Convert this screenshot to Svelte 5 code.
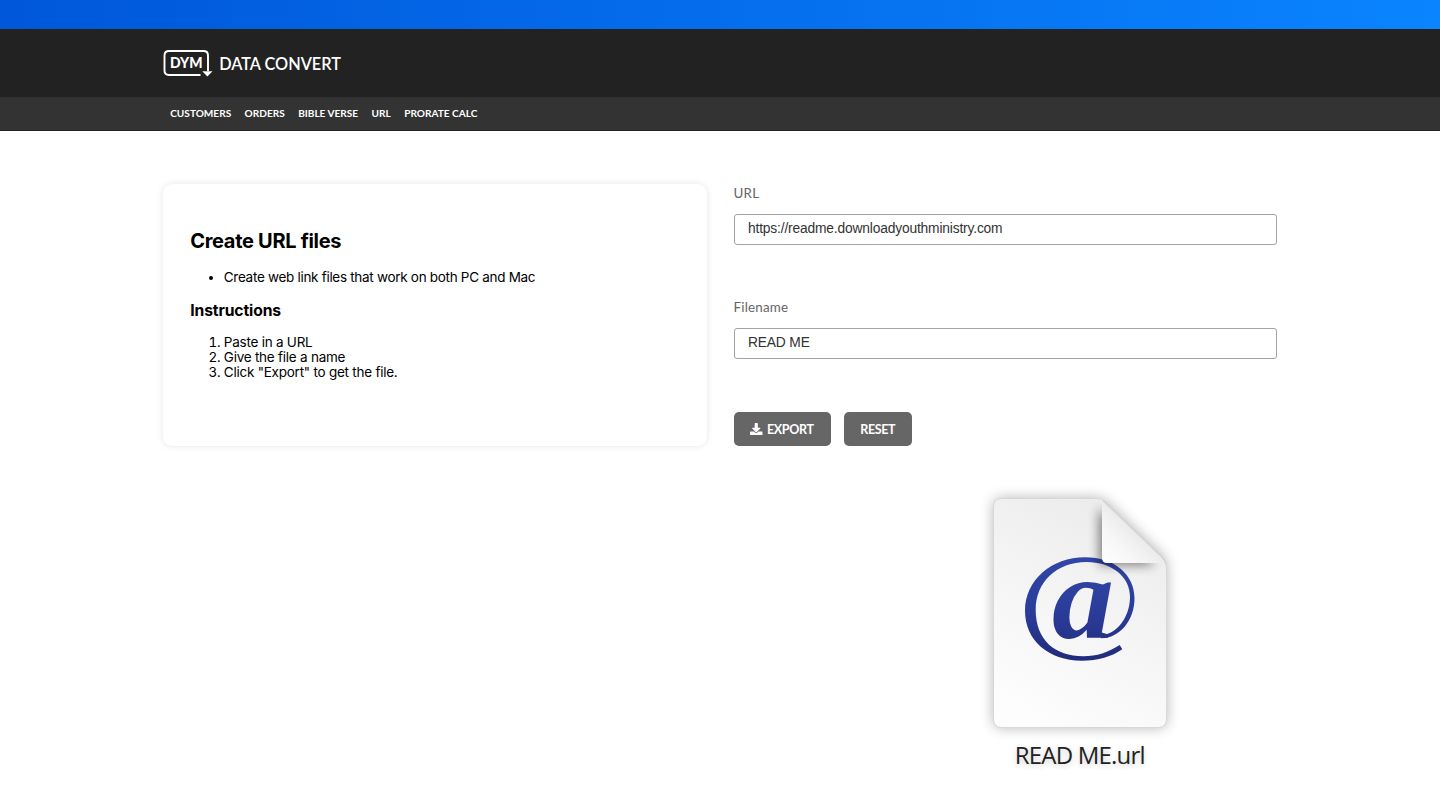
<script>
  let url = $state('https://readme.downloadyouthministry.com');
  let filename = $state('READ ME');
  const links = ['CUSTOMERS', 'ORDERS', 'BIBLE VERSE', 'URL', 'PRORATE CALC'];
</script>

<div class="strip"></div>
<header>
  <div class="wrap brand">
    <svg class="logo" width="50" height="30" viewBox="0 0 50 30">
      <path d="M45 23V7.500Q45 3 40.500 3H6Q1.500 3 1.500 7.500V22.500Q1.500 27 6 27H37.500" fill="none" stroke="#fff" stroke-width="1.9" />
      <path d="M39.300 23.200H49.500L44.400 28.600Z" fill="#fff" />
      <text x="7" y="20.300" textLength="32.500" lengthAdjust="spacingAndGlyphs">DYM</text>
    </svg>
    <span class="title">DATA CONVERT</span>
  </div>
</header>
<nav>
  <div class="wrap links">
    {#each links as link}<a href="#top">{link}</a>{/each}
  </div>
</nav>

<main class="wrap">
  <section class="card">
    <h2>Create URL files</h2>
    <ul><li>Create web link files that work on both PC and Mac</li></ul>
    <h3>Instructions</h3>
    <ol>
      <li>Paste in a URL</li>
      <li>Give the file a name</li>
      <li>Click "Export" to get the file.</li>
    </ol>
  </section>

  <section class="form">
    <label for="url">URL</label>
    <input id="url" bind:value={url} />
    <label for="filename">Filename</label>
    <input id="filename" bind:value={filename} />
    <div class="buttons">
      <button class="export">
        <svg width="12.500" height="12.500" viewBox="0 0 512 512" fill="#fff"><path d="M216 0h80c13 0 24 11 24 24v168h88c18 0 27 21 14 34L270 378c-8 8-20 8-28 0L90 226c-13-13-4-34 14-34h88V24c0-13 11-24 24-24zm296 376v112c0 13-11 24-24 24H24c-13 0-24-11-24-24V376c0-13 11-24 24-24h147l49 49c20 20 52 20 72 0l49-49h147c13 0 24 11 24 24z" /></svg>
        <span>EXPORT</span>
      </button>
      <button class="reset"><span>RESET</span></button>
    </div>
  </section>
</main>

<div class="wrap preview">
  <figure>
    <svg class="file" width="220" height="260" viewBox="970 480 220 260">
      <defs>
        <linearGradient id="paper" x1="0.7" y1="0" x2="0.3" y2="1">
          <stop offset="0" stop-color="#ebebeb" />
          <stop offset="0.4" stop-color="#f3f3f3" />
          <stop offset="1" stop-color="#fdfdfd" />
        </linearGradient>
        <linearGradient id="fold" x1="0.55" y1="0.45" x2="0" y2="1">
          <stop offset="0" stop-color="#e9e9e9" />
          <stop offset="0.5" stop-color="#f7f7f7" />
          <stop offset="1" stop-color="#ffffff" />
        </linearGradient>
        <linearGradient id="ink" gradientUnits="userSpaceOnUse" x1="0" y1="557" x2="0" y2="661">
          <stop offset="0" stop-color="#3146a6" />
          <stop offset="0.5" stop-color="#2b3d9b" />
          <stop offset="1" stop-color="#222b7c" />
        </linearGradient>
        <filter id="soft" x="-20%" y="-20%" width="140%" height="140%"><feGaussianBlur stdDeviation="7" /></filter>
        <filter id="foldsoft" x="-40%" y="-40%" width="180%" height="180%"><feGaussianBlur stdDeviation="5.500" /></filter>
        <clipPath id="sheet"><path d="M1001 498.500H1097Q1102 498.500 1106 502L1162 556Q1166.500 560.500 1166.500 567V719Q1166.500 727.500 1158 727.500H1002Q993.500 727.500 993.500 719V507Q993.500 498.500 1001 498.500Z" /></clipPath>
      </defs>
      <path d="M1001 498.500H1097Q1102 498.500 1106 502L1162 556Q1166.500 560.500 1166.500 567V719Q1166.500 727.500 1158 727.500H1002Q993.500 727.500 993.500 719V507Q993.500 498.500 1001 498.500Z" fill="#000" opacity="0.3" filter="url(#soft)" />
      <path d="M1001 498.500H1097Q1102 498.500 1106 502L1162 556Q1166.500 560.500 1166.500 567V719Q1166.500 727.500 1158 727.500H1002Q993.500 727.500 993.500 719V507Q993.500 498.500 1001 498.500Z" fill="url(#paper)" stroke="#d8d8d8" />
      <path d="M1122.300 649.300C1111.700 656.700 1098.300 660.700 1081.700 660.700C1048.300 660.700 1025 640 1025 611C1025 580 1051.700 557.300 1085 557.300C1115 557.300 1134.500 575 1134.500 598.300C1134.500 620 1120 638.300 1101 638.300L1100.300 635C1116.700 635 1130 616.700 1130 596.700C1130 576.700 1111.700 562 1086.700 562C1056.700 562 1035.700 581.700 1035.700 610C1035.700 640 1055 656.300 1083.300 656.300C1096.700 656.300 1108.300 652.300 1119.700 645Z" fill="url(#ink)" />
      <text class="at" x="1052" y="637.500" textLength="62" lengthAdjust="spacingAndGlyphs">a</text>
      <g clip-path="url(#sheet)">
        <path d="M1099 508V565H1155Z" fill="#000" opacity="0.48" filter="url(#foldsoft)" />
      </g>
      <path d="M1102 500.500Q1104 501 1107 504L1161 556Q1164 559.500 1165 563H1107Q1102 563 1102 558Z" fill="url(#fold)" />
      <path d="M1103 500.500L1162 557Q1165 560 1166 564" fill="none" stroke="#d2d2d2" stroke-width="1.3" />
    </svg>
    <figcaption>READ ME.url</figcaption>
  </figure>
</div>

<style>
  :global(body) { margin: 0; background: #fff; overflow: hidden; }
  .wrap { width: 1113.600px; margin: 0 auto; box-sizing: border-box; }
  .strip { height: 29px; background: linear-gradient(90deg, #0057d9, #0a84ff); }
  header { height: 68px; background: #222; }
  .brand { height: 68px; display: flex; align-items: center; gap: 6px; }
  .logo { flex: none; }
  .logo text { font: 900 15.500px Lato, sans-serif; fill: #fff; }
  .title { color: #fff; font: 600 16.300px/20px Lato, sans-serif; white-space: nowrap; padding-top: 2px; }
  nav { height: 34px; box-sizing: border-box; background: #333; border-bottom: 1px solid #222; }
  .links { height: 32px; display: flex; align-items: center; gap: 13.450px; padding-left: 7px; }
  .links a { color: #fff; text-decoration: none; font: 700 10.080px/14px Lato, sans-serif; }
  main { display: grid; grid-template-columns: 1fr 1fr; gap: 27px; padding-top: 53px; }
  .card { height: 262px; box-sizing: border-box; padding: 45px 27px; background: #fff; border-radius: 9px; box-shadow: 0 0 7px rgba(0, 0, 0, 0.1); font: 13.500px/15.300px Inter, sans-serif; letter-spacing: -0.300px; color: #000; }
  h2 { margin: 0; font-size: 20px; line-height: 24px; font-weight: 700; }
  h3 { margin: 16px 0 0; font-size: 15.700px; line-height: 19px; font-weight: 700; letter-spacing: -0.120px; }
  ul { margin: 17px 0 0; padding-left: 33.600px; }
  ol { margin: 14.400px 0 0; padding-left: 33.600px; letter-spacing: -0.240px; }
  .form { display: flex; flex-direction: column; }
  label { height: 20px; font: 400 13.400px/18px Lato, sans-serif; color: #666; letter-spacing: 0.200px; }
  input { height: 31px; box-sizing: border-box; margin: 10px 0 53px; border: 1px solid #a3a3a3; border-radius: 3px; padding: 0 13.500px 2px; font: 13.800px "Liberation Sans", sans-serif; letter-spacing: -0.170px; color: #333; background: #fff; outline: 0; }
  .buttons { display: flex; gap: 13px; }
  button { height: 34px; border: 0; border-radius: 5px; background: #666; color: #fff; font: 700 12.500px/16px Lato, sans-serif; letter-spacing: -0.350px; padding: 0; display: flex; align-items: center; justify-content: center; gap: 4px; }
  button span { padding-top: 1px; }
  .export { width: 97px; }
  .reset { width: 68.500px; }
  .preview { display: flex; justify-content: flex-end; padding-top: 34px; padding-right: 87px; }
  figure { margin: 0; width: 220px; display: flex; flex-direction: column; align-items: center; }
  .file { display: block; }
  .at { font: italic 700 118px "Liberation Serif", serif; fill: url(#ink); }
  figcaption { font: 24px/30px "Open Sans", sans-serif; letter-spacing: -0.800px; color: #222; text-shadow: 0 2px 6px rgba(0, 0, 0, 0.2); white-space: nowrap; }
</style>
